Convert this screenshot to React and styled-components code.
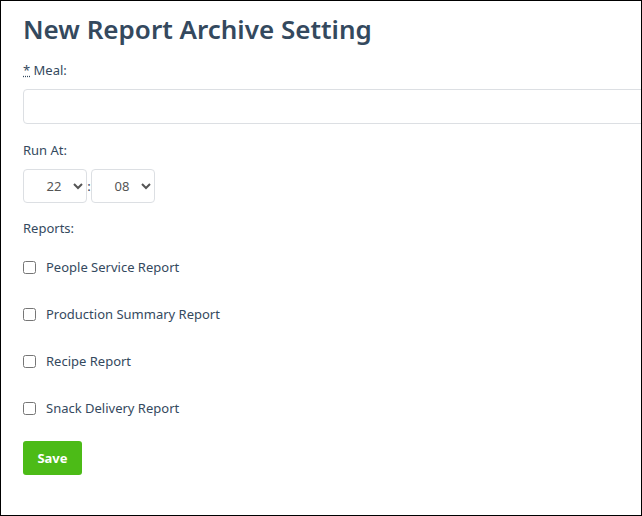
import React from 'react'
import styled, { createGlobalStyle } from 'styled-components'

const Global = createGlobalStyle`
  body { margin: 0; font-family: "Noto Sans", "Open Sans", sans-serif; color: #34495e; }
`

const Frame = styled.div`
  width: 642px;
  height: 516px;
  box-sizing: border-box;
  border: 1px solid #000;
  overflow: hidden;
  padding: 0 0 0 22px;
`

const Title = styled.h1`
  margin: 10px 0 0 0;
  font-size: 26px;
  font-weight: 600;
  color: #34495e;
  line-height: 36px;
`

const Label = styled.div`
  font-size: 13px;
  line-height: 18px;
  margin-top: ${p => p.$mt}px;
`

const Req = styled.abbr`
  text-decoration: underline dotted;
  cursor: help;
`

const TextInput = styled.input`
  display: block;
  box-sizing: border-box;
  width: 700px;
  height: 35px;
  margin-top: 10px;
  border: 1px solid #dcdfe3;
  border-radius: 4px;
`

const TimeRow = styled.div`
  display: flex;
  align-items: center;
  margin-top: 10px;
  font-size: 13px;
`

const Select = styled.select`
  width: 64px;
  height: 34px;
  border: 1px solid #dcdfe3;
  border-radius: 4px;
  background: #fff;
  font-family: "Noto Sans", sans-serif;
  font-size: 13px;
  color: #555;
  text-align: center;
  padding-left: 10px;
`

const Sep = styled.span`
  width: 4px;
  text-align: center;
`

const Check = styled.label`
  display: flex;
  align-items: center;
  gap: 10px;
  font-size: 13px;
  margin-top: ${p => p.$mt}px;
  input { margin: 0; width: 13px; height: 13px; }
`

const Save = styled.button`
  margin-top: 24px;
  width: 59px;
  height: 34px;
  background: #4cbb17;
  color: #fff;
  border: none;
  border-radius: 3px;
  font-family: "Noto Sans", sans-serif;
  font-weight: 700;
  font-size: 13px;
`

const reports = ['People Service Report', 'Production Summary Report', 'Recipe Report', 'Snack Delivery Report']

export default function App() {
  return (
    <Frame>
      <Global />
      <Title>New Report Archive Setting</Title>
      <Label $mt={14}><Req title="required">*</Req> Meal:</Label>
      <TextInput />
      <Label $mt={17}>Run At:</Label>
      <TimeRow>
        <Select defaultValue="22">
          {Array.from({ length: 24 }, (_, i) => String(i).padStart(2, '0')).map(v => <option key={v}>{v}</option>)}
        </Select>
        <Sep>:</Sep>
        <Select defaultValue="08">
          {Array.from({ length: 60 }, (_, i) => String(i).padStart(2, '0')).map(v => <option key={v}>{v}</option>)}
        </Select>
      </TimeRow>
      <Label $mt={16}>Reports:</Label>
      {reports.map((r, i) => (
        <Check key={r} $mt={i === 0 ? 21 : 29}>
          <input type="checkbox" />
          {r}
        </Check>
      ))}
      <Save>Save</Save>
    </Frame>
  )
}
